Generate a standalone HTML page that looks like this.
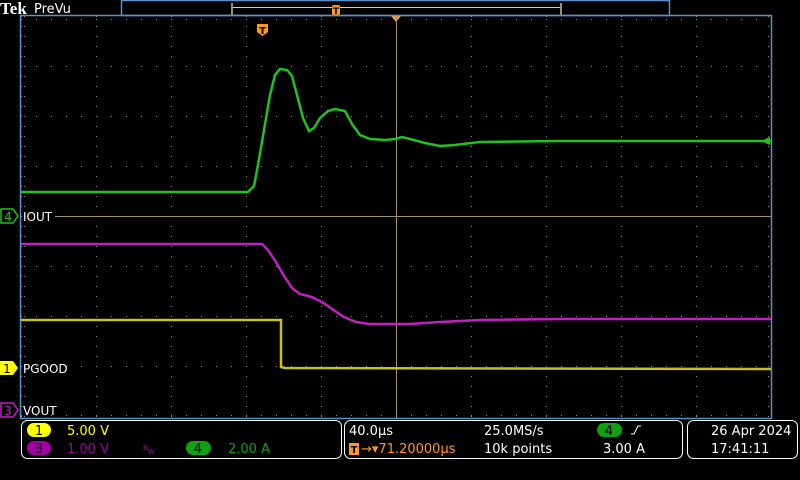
<!DOCTYPE html>
<html><head><style>
html,body{margin:0;padding:0;background:#000;width:800px;height:480px;overflow:hidden;font-family:"DejaVu Sans","Liberation Sans",sans-serif;}
</style></head><body>
<svg width="800" height="480" xmlns="http://www.w3.org/2000/svg" style="position:absolute;left:0;top:0">
<defs>
<pattern id="vd" x="0" y="16" width="1" height="10" patternUnits="userSpaceOnUse"><rect x="0" y="0" width="1" height="1" fill="#a09070"/></pattern>
<pattern id="hd" x="21" y="0" width="15" height="1" patternUnits="userSpaceOnUse"><rect x="0" y="0" width="1" height="1" fill="#a09070"/></pattern>
</defs>
<rect width="800" height="480" fill="#000"/>
<text x="0" y="14" fill="#fff" font-family="Liberation Serif,serif" font-weight="bold" font-size="17">Tek</text>
<text x="34" y="13" fill="#fff" font-size="13">PreVu</text>
<rect x="121.5" y="0.5" width="548" height="15" fill="none" stroke="#5b8fc9" stroke-width="1.5"/>
<rect x="231" y="3" width="2" height="13" fill="#a09070"/>
<rect x="560" y="3" width="2" height="13" fill="#a09070"/>
<line x1="233" y1="7.5" x2="560" y2="7.5" stroke="#e8e020"/>
<rect x="332" y="5" width="8" height="10" rx="2" fill="#ff9a1a"/>
<text x="336" y="14" fill="#000" font-size="9" font-weight="bold" text-anchor="middle">T</text>
<polygon points="391,16 401,16 396,22" fill="#ff9a1a"/>
<rect x="20.5" y="15.5" width="751" height="403" fill="none" stroke="#5b8fc9" stroke-width="1.5"/>
<g>
<rect x="21" y="16" width="1" height="402" fill="url(#vd)"/>
<rect x="96" y="16" width="1" height="402" fill="url(#vd)"/>
<rect x="171" y="16" width="1" height="402" fill="url(#vd)"/>
<rect x="246" y="16" width="1" height="402" fill="url(#vd)"/>
<rect x="321" y="16" width="1" height="402" fill="url(#vd)"/>
<rect x="471" y="16" width="1" height="402" fill="url(#vd)"/>
<rect x="546" y="16" width="1" height="402" fill="url(#vd)"/>
<rect x="621" y="16" width="1" height="402" fill="url(#vd)"/>
<rect x="696" y="16" width="1" height="402" fill="url(#vd)"/>
<rect x="768" y="16" width="1" height="402" fill="url(#vd)"/>
<rect x="24" y="16" width="1" height="402" fill="url(#vd)"/>
<rect x="21" y="19" width="750" height="1" fill="url(#hd)"/>
<rect x="21" y="66" width="750" height="1" fill="url(#hd)"/>
<rect x="21" y="116" width="750" height="1" fill="url(#hd)"/>
<rect x="21" y="166" width="750" height="1" fill="url(#hd)"/>
<rect x="21" y="266" width="750" height="1" fill="url(#hd)"/>
<rect x="21" y="316" width="750" height="1" fill="url(#hd)"/>
<rect x="21" y="366" width="750" height="1" fill="url(#hd)"/>
<rect x="21" y="415" width="750" height="1" fill="url(#hd)"/>
</g>
<line x1="396.5" y1="16" x2="396.5" y2="418" stroke="#a09070"/>
<line x1="55" y1="216.5" x2="771" y2="216.5" stroke="#a09070"/>
<path d="M257,24 h11 v8 l-5.5,4 l-5.5,-4z" fill="#ff9a1a"/>
<text x="262.5" y="34" fill="#000" font-size="10" font-weight="bold" text-anchor="middle">T</text>
<polyline fill="none" stroke="#22c022" stroke-width="2.5" points="21,192 248,192 254,186 258,165 264,130 270,95 275,75 280,69 287,70 292,76 297,95 303,118 309,131 314,128 320,118 328,111 335,109 345,111 352,124 360,135 370,139 385,140 395,139 402,137 410,139 425,143 440,146 455,145 480,142 560,141 771,141"/>
<polygon points="761,141 770,137 770,145" fill="#22c022"/>
<polyline fill="none" stroke="#c020c0" stroke-width="2.5" points="21,244 262,244 268,250 276,262 284,276 292,288 300,294 312,297 322,302 332,309 344,317 356,322 370,324 410,324 440,322 480,320 560,319 771,319"/>
<polyline fill="none" stroke="#c8c020" stroke-width="2.5" points="21,320 280,320 281,320 281,367 285,368 771,369"/>
<polygon points="1,209 13,209 18,216 13,223 1,223" fill="#000" stroke="#22c022" stroke-width="1.5"/>
<text x="8" y="221" fill="#22c022" font-size="12" text-anchor="middle">4</text>
<text x="23" y="221" fill="#fff" font-size="12">IOUT</text>
<polygon points="0,361 13,361 18,368 13,375 0,375" fill="#ffff00"/>
<text x="7" y="373" fill="#000" font-size="12" text-anchor="middle">1</text>
<text x="23" y="373" fill="#fff" font-size="12">PGOOD</text>
<polygon points="1,403 13,403 18,410 13,417 1,417" fill="#000" stroke="#c020c0" stroke-width="1.5"/>
<text x="8" y="415" fill="#c020c0" font-size="12" text-anchor="middle">3</text>
<text x="23" y="415" fill="#fff" font-size="12">VOUT</text>
<rect x="21.5" y="420.5" width="320" height="38" rx="6" fill="none" stroke="#fff"/>
<rect x="344.5" y="420.5" width="338" height="38" rx="6" fill="none" stroke="#fff"/>
<rect x="687.5" y="420.5" width="110" height="38" rx="6" fill="none" stroke="#fff"/>
<rect x="27" y="423" width="24" height="14" rx="7" fill="#ffff00"/>
<text x="39" y="435" fill="#000" font-size="13" text-anchor="middle">1</text>
<text x="67" y="435" fill="#ffff00" font-size="13">5.00 V</text>
<rect x="27" y="441" width="24" height="14" rx="7" fill="#a000a0"/>
<text x="39" y="453" fill="#000" font-size="13" text-anchor="middle">3</text>
<text x="67" y="453" fill="#a000a0" font-size="13">1.00 V</text>
<text x="143" y="450" fill="#a000a0" font-size="7">B</text><text x="148" y="454" fill="#a000a0" font-size="7">W</text>
<rect x="186" y="441" width="25" height="14" rx="7" fill="#10a010"/>
<text x="198" y="453" fill="#000" font-size="13" text-anchor="middle">4</text>
<text x="228" y="453" fill="#10a010" font-size="13">2.00 A</text>
<text x="349" y="435" fill="#fff" font-size="13">40.0µs</text>
<rect x="349" y="443" width="10" height="12" fill="#ff9a1a"/>
<text x="354" y="453" fill="#000" font-size="10" font-weight="bold" text-anchor="middle">T</text>
<text x="361" y="453" fill="#ff9a1a" font-size="13">→▾71.20000µs</text>
<text x="484" y="435" fill="#fff" font-size="13">25.0MS/s</text>
<text x="484" y="453" fill="#fff" font-size="13">10k points</text>
<rect x="597" y="423" width="25" height="14" rx="7" fill="#10a010"/>
<text x="609" y="435" fill="#000" font-size="13" text-anchor="middle">4</text>
<path d="M631,434 h3 l4,-8 h3" fill="none" stroke="#fff" stroke-width="1"/>
<text x="603" y="453" fill="#fff" font-size="13">3.00 A</text>
<text x="711" y="435" fill="#fff" font-size="13">26 Apr  2024</text>
<text x="711" y="453" fill="#fff" font-size="13">17:41:11</text>
</svg>
</body></html>
